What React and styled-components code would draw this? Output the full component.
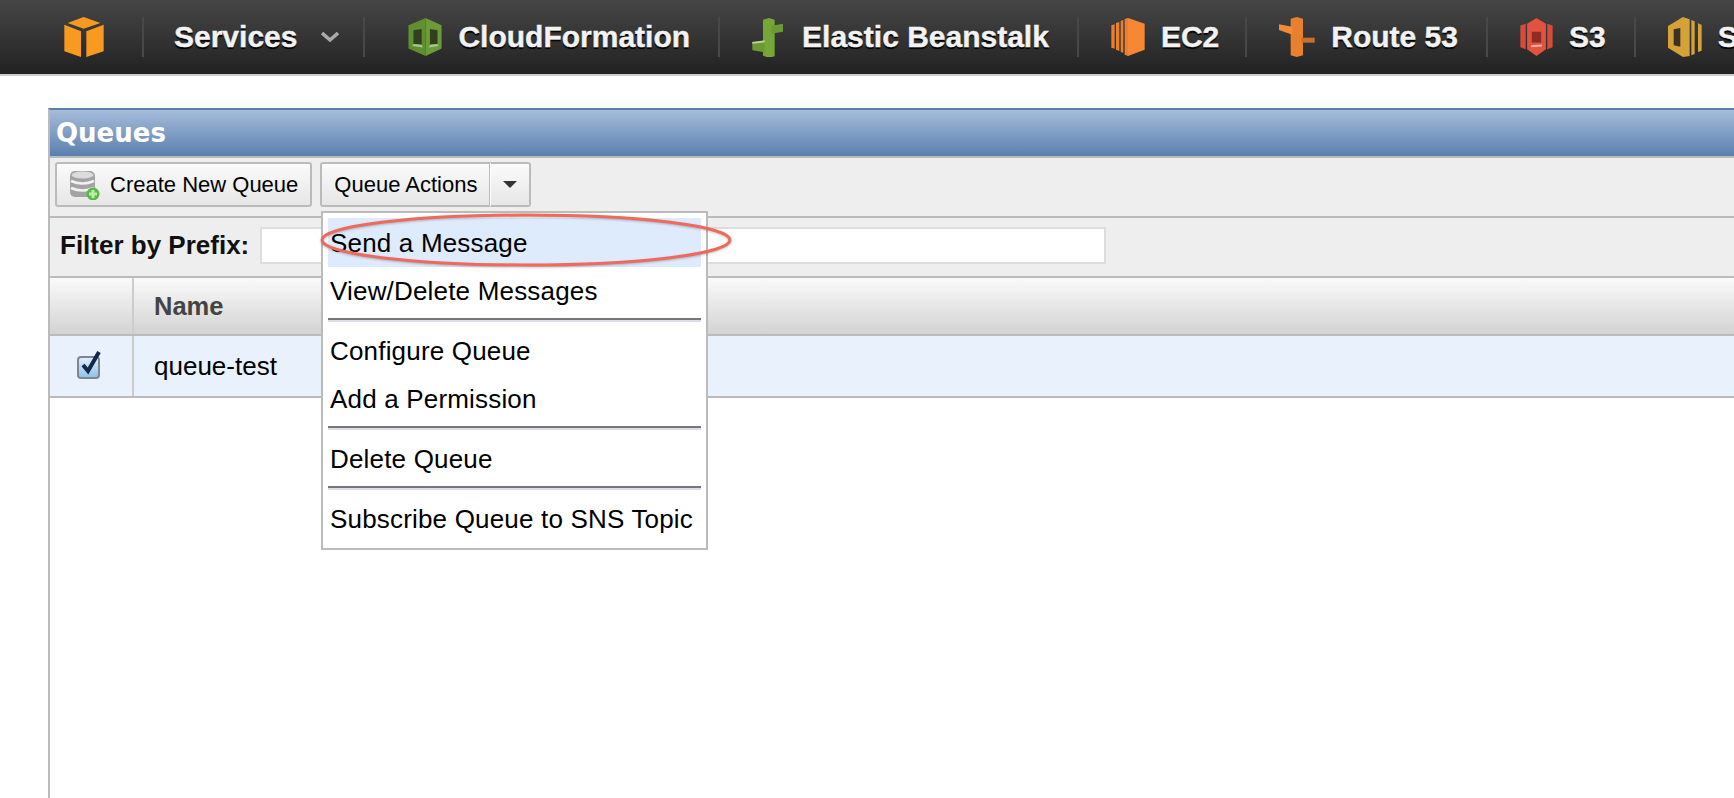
import React from 'react'
import styled, { createGlobalStyle } from 'styled-components'

const GlobalStyle = createGlobalStyle`
  html, body {
    margin: 0;
    height: 100%;
    overflow: hidden;
    background: #fff;
    font-family: "Liberation Sans", Arial, sans-serif;
  }
`

const Page = styled.div`
  width: 1734px;
  height: 798px;
  overflow: hidden;
  display: flex;
  flex-direction: column;
`

const Nav = styled.nav`
  flex: none;
  height: 74px;
  padding-left: 64px;
  display: flex;
  align-items: center;
  background: linear-gradient(#464646, #222);
  border-bottom: 2px solid #ccc;
  white-space: nowrap;
  overflow: hidden;
`

const NavItem = styled.div`
  flex: none;
  height: 40px;
  display: flex;
  align-items: center;
  gap: ${p => p.$gap ?? 16}px;
  padding: 0 ${p => p.$right ?? 28}px 0 ${p => p.$left ?? 32}px;
  border-right: 2px solid #484848;
  &:last-child { border-right: none; }
`

const NavText = styled.span`
  font-size: 30px;
  font-weight: bold;
  color: #f2f2f2;
  -webkit-text-stroke: 0.4px #f2f2f2;
  text-shadow: 0 2px 1px #000;
`

const NavIcon = styled.svg`
  flex: none;
  display: block;
`

const Chevron = styled.svg`
  flex: none;
  display: block;
  margin-left: 24px;
`

const Main = styled.main`
  flex: 1;
  padding: 32px 0 0 48px;
  min-height: 0;
`

const Panel = styled.section`
  position: relative;
  width: 1700px;
  height: 700px;
  box-sizing: border-box;
  border-left: 2px solid #bbb;
  border-top: 2px solid #5b80ad;
`

const TitleBar = styled.h2`
  margin: 0;
  height: 46px;
  padding-left: 6px;
  display: flex;
  align-items: center;
  background: linear-gradient(#a6bcda, #5b80ae);
  color: #fff;
  font-family: "DejaVu Sans", Verdana, sans-serif;
  font-size: 26px;
  font-weight: bold;
`

const Toolbar = styled.div`
  box-sizing: border-box;
  height: 62px;
  padding: 4px 5px 0;
  display: flex;
  align-items: flex-start;
  gap: 8px;
  background: #eee;
  border-top: 2px solid #bbb;
  border-bottom: 2px solid #bbb;
`

const Button = styled.button`
  box-sizing: border-box;
  height: 45px;
  padding: 0 12px;
  display: flex;
  align-items: center;
  gap: ${p => p.$gap ?? 0}px;
  background: linear-gradient(#fbfbfb, #e6e6e6);
  border: 2px solid #bbb;
  border-radius: 3px;
  color: #000;
  font-family: inherit;
  font-size: 22px;
`

const SplitGroup = styled.div`
  display: flex;
`

const ActionButton = styled(Button)`
  border-radius: 3px 0 0 3px;
  border-right: 1px solid #bbb;
`

const ArrowButton = styled(Button)`
  width: 41px;
  padding: 0;
  justify-content: center;
  border-left: 1px solid #fff;
  border-radius: 0 3px 3px 0;
`

const Arrow = styled.span`
  width: 0;
  height: 0;
  border-left: 7px solid transparent;
  border-right: 7px solid transparent;
  border-top: 7px solid #333;
`

const FilterRow = styled.div`
  box-sizing: border-box;
  height: 60px;
  padding: 9px 0 0 10px;
  display: flex;
  align-items: flex-start;
  gap: 11px;
  background: #eee;
  border-bottom: 2px solid #bbb;
`

const FilterLabel = styled.label`
  line-height: 37px;
  font-size: 26px;
  font-weight: bold;
  color: #111;
`

const FilterInput = styled.input`
  box-sizing: border-box;
  width: 846px;
  height: 37px;
  background: #fff;
  border: 2px solid #ddd;
`

const TableRow = styled.div`
  box-sizing: border-box;
  height: ${p => p.$height}px;
  display: grid;
  grid-template-columns: 84px 1fr;
  background: ${p => p.$head ? 'linear-gradient(#fafafa, #d3d3d3)' : '#e9f1fc'};
  border-bottom: 2px solid #bbb;
`

const Cell = styled.div`
  box-sizing: border-box;
  display: flex;
  align-items: center;
  justify-content: ${p => p.$center ? 'center' : 'flex-start'};
  padding: ${p => p.$center ? '0 5px 2px 0' : '0 0 0 20px'};
  border-right: ${p => p.$center ? '2px solid #ccc' : 'none'};
  color: ${p => p.$head ? '#444' : '#000'};
  font-size: ${p => p.$head ? 25.5 : 26}px;
  font-weight: ${p => p.$head ? 'bold' : 'normal'};
`

const Menu = styled.div`
  position: absolute;
  left: 271px;
  top: 101px;
  box-sizing: border-box;
  width: 387px;
  height: 339px;
  padding: 5px;
  background: #fff;
  border: 2px solid #bbb;
`

const MenuItem = styled.div`
  height: ${p => p.$active ? 49 : 48}px;
  padding-left: 2px;
  line-height: ${p => p.$active ? 50 : 48}px;
  font-size: 26px;
  letter-spacing: 0.18px;
  color: #000;
  white-space: nowrap;
  background: ${p => p.$active ? '#deebfc' : 'transparent'};
`

const MenuDivider = styled.hr`
  box-sizing: border-box;
  height: 4px;
  margin: 3px 0 5px;
  border: none;
  border-top: 2px solid #777;
  border-bottom: 2px solid #dde;
`

const Highlight = styled.svg`
  position: absolute;
  left: 270px;
  top: 102px;
  overflow: visible;
  pointer-events: none;
  filter: drop-shadow(0 1px 1px rgba(0, 0, 0, 0.25));
`

const BoxIcon = () => (
  <NavIcon width="40" height="40" viewBox="72 27 118 120">
    <path d="M130 27L180 45 130 62 82 45Z" fill="#f79a1f" />
    <path d="M72 50L122 70V147L72 130Z" fill="#f79a1f" />
    <path d="M138 70L190 50V130L138 147Z" fill="#f79a1f" />
  </NavIcon>
)

const CloudFormationIcon = () => (
  <NavIcon width="34" height="38" viewBox="40 33 100 115">
    <path d="M40 55L92 33V148L40 125Z" fill="#5f8f30" />
    <path d="M92 33L140 55V125L92 148Z" fill="#6c9c38" />
    <path d="M55 70L80 66V114L55 112Z" fill="#33401f" />
    <path d="M105 66L128 70V112L105 114Z" fill="#33401f" />
    <path d="M55 112L80 114 84 122 52 118Z" fill="#a9c98a" />
    <path d="M105 114L128 112 130 118 102 122Z" fill="#a9c98a" />
  </NavIcon>
)

const BeanstalkIcon = () => (
  <NavIcon width="32" height="39" viewBox="68 33 94 117">
    <path d="M100 38L118 33 135 38V148L118 152 100 146Z" fill="#76a637" />
    <path d="M125 56L160 50V74L125 80Z" fill="#6b9a33" />
    <path d="M68 105L105 100V136L68 130Z" fill="#6b9a33" />
    <path d="M68 105L105 100V106L68 110Z" fill="#bcd49a" />
  </NavIcon>
)

const Ec2Icon = () => (
  <NavIcon width="34" height="38" viewBox="62 33 100 114">
    <path d="M62 55L72 52V125L62 122Z" fill="#e8802f" />
    <path d="M76 48L86 45V132L76 128Z" fill="#e8802f" />
    <path d="M90 42L98 39V138L90 134Z" fill="#e8802f" />
    <path d="M102 36L112 33V147L102 143Z" fill="#e8802f" />
    <path d="M112 33L162 50V128L112 147Z" fill="#f68734" />
  </NavIcon>
)

const Route53Icon = () => (
  <NavIcon width="36" height="40" viewBox="565 33 108 120">
    <path d="M600 38L618 33 637 38V148L618 153 600 148Z" fill="#e9802f" />
    <path d="M565 55L605 62V86L565 72Z" fill="#f58a36" />
    <path d="M632 95H672V110H632Z" fill="#c9702e" />
  </NavIcon>
)

const S3Icon = () => (
  <NavIcon width="33" height="38" viewBox="60 33 96 113">
    <path d="M60 55L76 50V126L60 120Z" fill="#d94a3a" />
    <path d="M140 50L156 55V120L140 126Z" fill="#d94a3a" />
    <path d="M80 50L108 33 136 50V126L108 146 80 126Z" fill="#e2523f" />
    <path d="M94 74H122V106H94Z" fill="#8e2d24" />
    <path d="M92 114L124 112V118L92 120Z" fill="#f2b3a8" />
  </NavIcon>
)

const SqsIcon = () => (
  <NavIcon width="34" height="40" viewBox="505 33 102 120">
    <path d="M505 60L550 33 570 40V150L550 153 505 125Z" fill="#d5a238" />
    <path d="M522 70L542 66V122L522 118Z" fill="#3a3226" />
    <path d="M575 42L585 46V144L575 148Z" fill="#d5a238" />
    <path d="M595 52L606 56V134L595 138Z" fill="#d5a238" />
  </NavIcon>
)

const DatabaseAddIcon = () => (
  <NavIcon width="31" height="30" viewBox="0 0 31 30">
    <rect x="1" y="1" width="25" height="26" rx="5" fill="#a3a3a3" />
    <ellipse cx="13.5" cy="5" rx="11" ry="3.500" fill="#dcdcdc" />
    <path d="M2 11q11.500 5 23 0M2 18q11.500 5 23 0" stroke="#f2f2f2" strokeWidth="2.500" fill="none" />
    <circle cx="24" cy="24" r="6.500" fill="#57b947" />
    <path d="M24 20v8M20 24h8" stroke="#b6f0a0" strokeWidth="3" />
  </NavIcon>
)

const CheckedBox = () => (
  <svg width="24" height="30" viewBox="0 0 24 30">
    <defs>
      <linearGradient id="check-bg" x1="0" y1="0" x2="0" y2="1">
        <stop offset="0" stopColor="#e3effb" />
        <stop offset="1" stopColor="#8cc0ee" />
      </linearGradient>
    </defs>
    <rect x="1" y="7" width="21" height="21" rx="3" fill="url(#check-bg)" stroke="#7d8791" strokeWidth="2" />
    <path d="M6 15l5 6L22 2" fill="none" stroke="#14294a" strokeWidth="4" />
  </svg>
)

const navItems = [
  { name: 'CloudFormation', icon: <CloudFormationIcon />, left: 43 },
  { name: 'Elastic Beanstalk', icon: <BeanstalkIcon />, gap: 18 },
  { name: 'EC2', icon: <Ec2Icon />, right: 26 },
  { name: 'Route 53', icon: <Route53Icon /> },
  { name: 'S3', icon: <S3Icon /> },
  { name: 'SQS', icon: <SqsIcon /> },
]

const App = () => {
  return (
    <Page>
      <GlobalStyle />
      <Nav>
        <NavItem $left={0} $right={38}><BoxIcon /></NavItem>
        <NavItem $gap={0} $left={30} $right={24}>
          <NavText>Services</NavText>
          <Chevron width="18" height="11" viewBox="0 0 18 11">
            <path d="M1 1l8 7 8-7" fill="none" stroke="#aaa" strokeWidth="3.500" />
          </Chevron>
        </NavItem>
        {navItems.map(item => (
          <NavItem key={item.name} $left={item.left} $right={item.right} $gap={item.gap}>
            {item.icon}
            <NavText>{item.name}</NavText>
          </NavItem>
        ))}
      </Nav>
      <Main>
        <Panel>
          <TitleBar>Queues</TitleBar>
          <Toolbar>
            <Button $gap={10}><DatabaseAddIcon />Create New Queue</Button>
            <SplitGroup>
              <ActionButton>Queue Actions</ActionButton>
              <ArrowButton aria-label="Queue Actions menu"><Arrow /></ArrowButton>
            </SplitGroup>
          </Toolbar>
          <FilterRow>
            <FilterLabel>Filter by Prefix:</FilterLabel>
            <FilterInput />
          </FilterRow>
          <TableRow $head $height={58}>
            <Cell $center />
            <Cell $head>Name</Cell>
          </TableRow>
          <TableRow $height={62}>
            <Cell $center><CheckedBox /></Cell>
            <Cell>queue-test</Cell>
          </TableRow>
          <Menu>
            <MenuItem $active>Send a Message</MenuItem>
            <MenuItem>View/Delete Messages</MenuItem>
            <MenuDivider />
            <MenuItem>Configure Queue</MenuItem>
            <MenuItem>Add a Permission</MenuItem>
            <MenuDivider />
            <MenuItem>Delete Queue</MenuItem>
            <MenuDivider />
            <MenuItem>Subscribe Queue to SNS Topic</MenuItem>
          </Menu>
          <Highlight width="412" height="56" viewBox="0 0 412 56">
            <ellipse cx="206" cy="28" rx="204" ry="25" fill="none" stroke="#f0695c" strokeWidth="3" />
          </Highlight>
        </Panel>
      </Main>
    </Page>
  )
}

export default App
